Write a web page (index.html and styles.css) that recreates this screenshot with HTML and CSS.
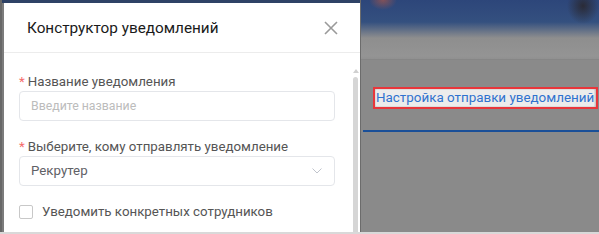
FILE: index.html
```html
<!DOCTYPE html>
<html lang="ru">
<head>
<meta charset="utf-8">
<title>Конструктор уведомлений</title>
<link rel="stylesheet" href="styles.css">
</head>
<body>
<div class="frame">
  <div class="left-edge"></div>
  <div class="modal-col">
    <div class="modal">
      <div class="modal-header">
        <h2 class="modal-title">Конструктор уведомлений</h2>
        <svg class="close" width="14" height="14" viewBox="0 0 14 14" aria-hidden="true">
          <path d="M1 1 L13 13 M13 1 L1 13" stroke="#9a9a9a" stroke-width="1.6" fill="none"/>
        </svg>
      </div>
      <div class="modal-body">
        <div class="form">
          <div class="field">
            <div class="label"><span class="req">*</span>Название уведомления</div>
            <div class="input placeholder">Введите название</div>
          </div>
          <div class="field">
            <div class="label"><span class="req">*</span>Выберите, кому отправлять уведомление</div>
            <div class="input select">
              <span>Рекрутер</span>
              <svg width="10" height="6" viewBox="0 0 10 6" aria-hidden="true">
                <path d="M0.5 0.5 L5 5 L9.5 0.5" stroke="#c0c4cc" stroke-width="1" fill="none"/>
              </svg>
            </div>
          </div>
          <label class="check-row">
            <span class="checkbox"></span>
            <span>Уведомить конкретных сотрудников</span>
          </label>
        </div>
        <div class="scrollbar">
          <span class="arrow"></span>
          <span class="thumb"></span>
        </div>
      </div>
    </div>
  </div>
  <div class="backdrop">
    <div class="bd-top"></div>
    <div class="bd-row">
      <div class="hl-box"><span class="hl-link">Настройка отправки уведомлений</span></div>
    </div>
    <div class="bd-line"></div>
  </div>
</div>
</body>
</html>
```
FILE: styles.css
```css
* { box-sizing: border-box; }
html, body { margin: 0; padding: 0; }
body {
  width: 599px;
  height: 234px;
  overflow: hidden;
  font-family: Roboto, "Noto Sans", "Liberation Sans", sans-serif;
  background: #8a8a8a;
}
.frame {
  display: flex;
  width: 599px;
  height: 234px;
  border-bottom: 2px solid #d9d9d9;
}
.left-edge {
  flex: 0 0 4px;
  background: linear-gradient(#2e4266 0 3px, #7c7c7c 3px);
  border-left: 2px solid #686868;
}
.modal-col {
  flex: 0 0 356px;
  padding-top: 3px;
  background: linear-gradient(#2e4266 0 3px, #8a8a8a 3px);
  display: flex;
}
.modal {
  flex: 1;
  background: #fff;
  display: flex;
  flex-direction: column;
}
.modal-header {
  height: 50px;
  border-bottom: 1px solid #ececec;
  display: flex;
  align-items: center;
  justify-content: space-between;
  padding: 0 22px 0 23px;
}
.modal-title {
  margin: 0;
  font-size: 15.3px;
  font-weight: 400;
  color: #1a1a1a;
}
.close { display: block; margin-top: 1px; }
.modal-body {
  flex: 1;
  display: flex;
  padding-left: 15px;
}
.form {
  flex: 0 0 316px;
  padding-top: 19px;
}
.field { margin-bottom: 16px; }
.label {
  font-size: 13.3px;
  line-height: 19px;
  color: #555;
}
.req {
  color: #f56c6c;
  margin-right: 3px;
}
.input {
  height: 30px;
  border: 1px solid #e4e6ea;
  border-radius: 4px;
  padding: 0 11px;
  font-size: 13.3px;
  line-height: 28px;
  display: flex;
  align-items: center;
  justify-content: space-between;
}
.placeholder { color: #bcbcbc; font-size: 12.3px; }
.select { color: #5f6166; }
.select svg { margin-right: 1px; }
.check-row {
  display: flex;
  align-items: center;
  gap: 9px;
  font-size: 13.3px;
  line-height: 20px;
  color: #555;
}
.checkbox {
  flex: 0 0 14px;
  height: 14px;
  border: 1px solid #c8c8c8;
  border-radius: 2px;
  background: #fff;
}
.scrollbar {
  margin-left: 18px;
  width: 5px;
  display: flex;
  flex-direction: column;
  align-items: center;
  padding-top: 16px;
}
.arrow {
  width: 0;
  height: 0;
  border-left: 3px solid transparent;
  border-right: 3px solid transparent;
  border-bottom: 4px solid #d0d0d0;
}
.thumb {
  margin-top: 4px;
  flex: 1;
  width: 5px;
  background: #d6d6d6;
  border-radius: 3px 3px 0 0;
}
.backdrop {
  flex: 1;
  min-width: 0;
  border-left: 1px solid #6c6c6c;
  display: flex;
  flex-direction: column;
  background: #8a8a8a;
}
.bd-top {
  height: 60px;
  border-bottom: 1px solid #868686;
  background:
    radial-gradient(ellipse 14px 10px at 22px 0, rgba(200,90,60,0.55), transparent),
    radial-gradient(ellipse 16px 18px at 222px 6px, rgba(40,30,25,0.7), transparent),
    linear-gradient(#2d467a 0, #34507f 22px, #8e8e8e 38px, #949494 56px, #8f8f8f 60px);
}
.bd-row {
  padding: 27px 1px 0 12px;
}
.hl-box {
  border: 2px solid #e8363b;
  height: 22px;
  display: flex;
  align-items: center;
  padding-left: 1px;
  overflow: hidden;
}
.hl-link {
  font-size: 13.4px;
  line-height: 16px;
  color: #2f72cf;
  background: #ececec;
  box-shadow: 0 0 3px 2px #ececec;
  white-space: nowrap;
}
.bd-line {
  margin-top: 21px;
  margin-left: 2px;
  height: 2px;
  background: #1a4f98;
}
```
